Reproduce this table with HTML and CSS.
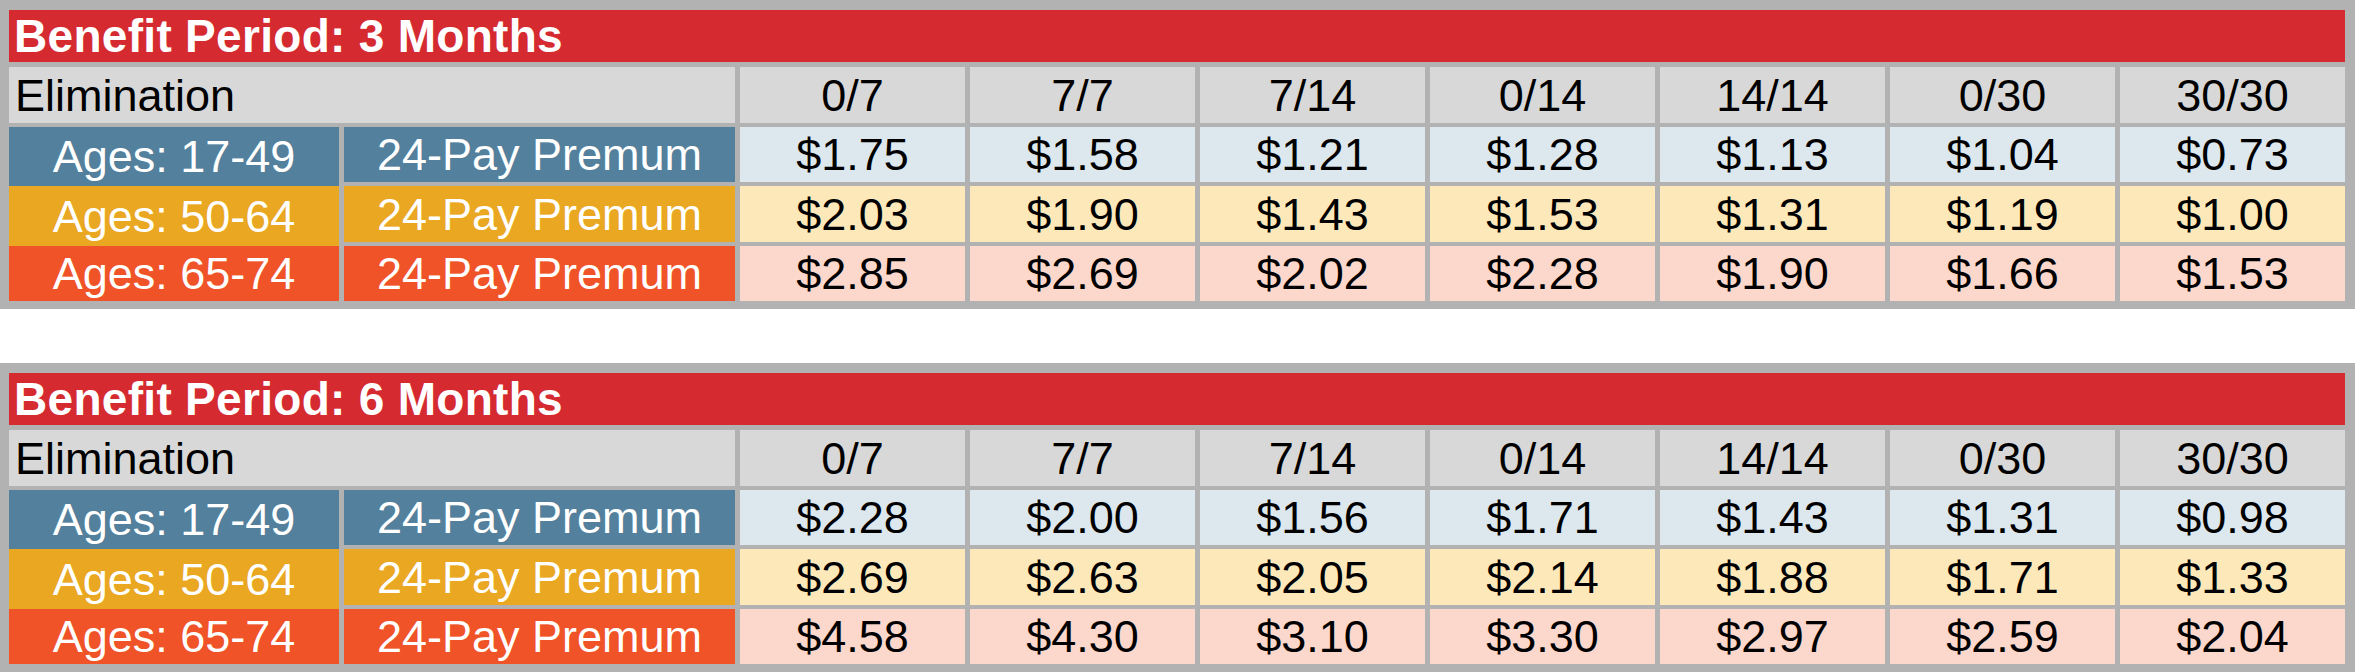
FILE: index.html
```html
<!DOCTYPE html>
<html lang="en">
<head>
<meta charset="utf-8">
<title>Benefit Period Rates</title>
<link rel="stylesheet" href="styles.css">
</head>
<body>
<div class="page">
  <section class="rate-table">
    <div class="title">Benefit Period: 3 Months</div>
    <div class="elim-label">Elimination</div>
    <div class="elim">0/7</div><div class="elim">7/7</div><div class="elim">7/14</div><div class="elim">0/14</div><div class="elim">14/14</div><div class="elim">0/30</div><div class="elim">30/30</div>

    <div class="age age-young">Ages: 17-49</div>
    <div class="pay pay-young">24-Pay Premum</div>
    <div class="val val-young">$1.75</div><div class="val val-young">$1.58</div><div class="val val-young">$1.21</div><div class="val val-young">$1.28</div><div class="val val-young">$1.13</div><div class="val val-young">$1.04</div><div class="val val-young">$0.73</div>

    <div class="age age-mid">Ages: 50-64</div>
    <div class="pay pay-mid">24-Pay Premum</div>
    <div class="val val-mid">$2.03</div><div class="val val-mid">$1.90</div><div class="val val-mid">$1.43</div><div class="val val-mid">$1.53</div><div class="val val-mid">$1.31</div><div class="val val-mid">$1.19</div><div class="val val-mid">$1.00</div>

    <div class="age age-old">Ages: 65-74</div>
    <div class="pay pay-old">24-Pay Premum</div>
    <div class="val val-old">$2.85</div><div class="val val-old">$2.69</div><div class="val val-old">$2.02</div><div class="val val-old">$2.28</div><div class="val val-old">$1.90</div><div class="val val-old">$1.66</div><div class="val val-old">$1.53</div>
  </section>

  <section class="rate-table">
    <div class="title">Benefit Period: 6 Months</div>
    <div class="elim-label">Elimination</div>
    <div class="elim">0/7</div><div class="elim">7/7</div><div class="elim">7/14</div><div class="elim">0/14</div><div class="elim">14/14</div><div class="elim">0/30</div><div class="elim">30/30</div>

    <div class="age age-young">Ages: 17-49</div>
    <div class="pay pay-young">24-Pay Premum</div>
    <div class="val val-young">$2.28</div><div class="val val-young">$2.00</div><div class="val val-young">$1.56</div><div class="val val-young">$1.71</div><div class="val val-young">$1.43</div><div class="val val-young">$1.31</div><div class="val val-young">$0.98</div>

    <div class="age age-mid">Ages: 50-64</div>
    <div class="pay pay-mid">24-Pay Premum</div>
    <div class="val val-mid">$2.69</div><div class="val val-mid">$2.63</div><div class="val val-mid">$2.05</div><div class="val val-mid">$2.14</div><div class="val val-mid">$1.88</div><div class="val val-mid">$1.71</div><div class="val val-mid">$1.33</div>

    <div class="age age-old">Ages: 65-74</div>
    <div class="pay pay-old">24-Pay Premum</div>
    <div class="val val-old">$4.58</div><div class="val val-old">$4.30</div><div class="val val-old">$3.10</div><div class="val val-old">$3.30</div><div class="val val-old">$2.97</div><div class="val val-old">$2.59</div><div class="val val-old">$2.04</div>
  </section>
</div>
</body>
</html>
```

FILE: styles.css
```css
html, body {
  margin: 0;
  padding: 0;
  background: #ffffff;
}

body {
  font-family: "Liberation Sans", Arial, sans-serif;
  font-size: 45px;
  color: #000000;
}

.page {
  display: flex;
  flex-direction: column;
  gap: 54px;
  width: 2355px;
}

.rate-table {
  display: grid;
  grid-template-columns: 330px 391px repeat(7, 1fr);
  grid-template-rows: 53px 56px 55px 56px 55px;
  column-gap: 5px;
  row-gap: 4px;
  padding: 10px 10px 8px 9px;
  background: #b2b2b2;
  height: 309px;
  box-sizing: border-box;
}

.rate-table > div {
  display: flex;
  align-items: center;
  justify-content: center;
  white-space: nowrap;
  line-height: 1;
}

.rate-table > .title {
  grid-column: 1 / -1;
  justify-content: flex-start;
  padding-left: 5px;
  margin-bottom: 1px;
  background: #d42a30;
  color: #ffffff;
  font-weight: bold;
  font-size: 46px;
  letter-spacing: 0.3px;
}

.rate-table > .elim-label {
  grid-column: 1 / 3;
  justify-content: flex-start;
  padding-left: 6px;
  background: #d8d8d8;
}

.elim {
  background: #d8d8d8;
}

.age,
.pay {
  color: #ffffff;
}

.age-young,
.age-mid {
  margin-bottom: -4px;
}

.age-young, .pay-young { background: #53809c; }
.age-mid, .pay-mid { background: #e9a722; }
.age-old, .pay-old { background: #ef5327; }

.val-young { background: #dce7ee; }
.val-mid { background: #fde8ba; }
.val-old { background: #fbd7cc; }
```
